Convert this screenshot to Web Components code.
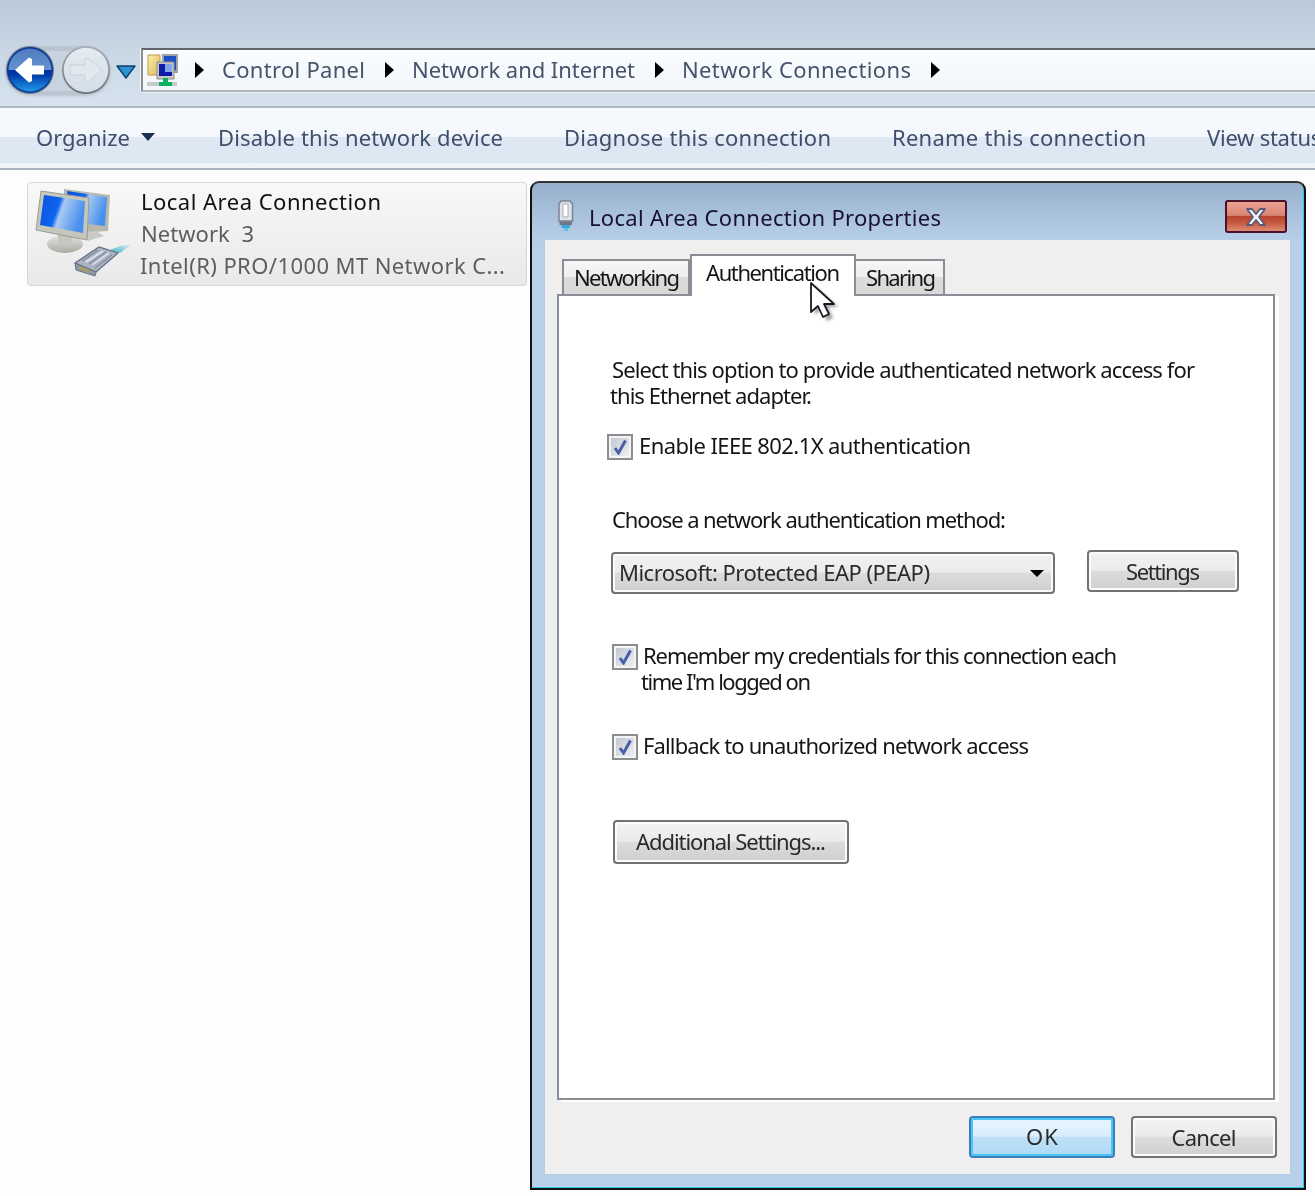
<!DOCTYPE html>
<html lang="en"><head><meta charset="utf-8"><title>Local Area Connection Properties</title>
<style>
html,body{margin:0;padding:0;height:1196px;overflow:hidden;background:#fdfdfd}
body{font:22px/26px "Noto Sans","Open Sans",sans-serif;color:#111}
</style></head><body>
<explorer-window>
  <nav-bar>
    <crumb-item w="143">Control Panel</crumb-item>
    <crumb-item w="223">Network and Internet</crumb-item>
    <crumb-item w="229">Network Connections</crumb-item>
  </nav-bar>
  <command-bar>
    <command-item w="94" menu>Organize</command-item>
    <command-item w="285">Disable this network device</command-item>
    <command-item w="267">Diagnose this connection</command-item>
    <command-item w="254">Rename this connection</command-item>
    <command-item w="300">View status of this connection</command-item>
  </command-bar>
  <connection-list>
    <connection-tile></connection-tile>
  </connection-list>
  <props-dialog></props-dialog>
</explorer-window>
<script>
function def(name, css, html, after){
  customElements.define(name, class extends HTMLElement{
    connectedCallback(){
      if(this.shadowRoot) return;
      const r=this.attachShadow({mode:'open'});
      r.innerHTML='<style>'+css+'</style>'+html(this);
      if(after) after(this,r);
    }
  });
}
def('explorer-window',':host{display:flex;flex-direction:column;position:relative;height:1196px;overflow:hidden}',()=>'<slot></slot>');

def('nav-bar',`
:host{display:flex;align-items:flex-start;height:108px;box-sizing:border-box;padding-top:43px;border-bottom:2px solid #aeb9c6;
 background:linear-gradient(#b9c9d8,#c8d6e4 45%,#d6e3ef);overflow:hidden;flex:none}
svg{display:block;flex:none}
.addr{flex:1;margin:5px 0 0 5px;height:44px;box-sizing:border-box;display:flex;align-items:center;padding-left:4px;
 border:2px solid #8a8d92;border-top-color:#62656a;border-bottom-color:#b4b8bc;border-right:0;
 background:linear-gradient(#fbfdfe,#f1f6fb);box-shadow:0 1px 0 #eaf1f8,-1px 0 0 #eef4fa;font-size:22px;color:#45536b}
`,()=>`
<svg width="136" height="56" viewBox="0 43 136 56" aria-hidden="true">
<defs>
<linearGradient id="bt" x1="0" y1="0" x2="0" y2="1"><stop offset="0" stop-color="#4f7cc0"/><stop offset=".6" stop-color="#6c96d2"/><stop offset="1" stop-color="#3a6cb8"/></linearGradient>
<linearGradient id="bb" x1="0" y1="0" x2="0" y2="1"><stop offset="0" stop-color="#00207e"/><stop offset=".6" stop-color="#0038a8"/><stop offset="1" stop-color="#1f9ae8"/></linearGradient>
<clipPath id="hi"><rect x="0" y="43" width="60" height="27"/></clipPath>
<linearGradient id="fw" x1="0" y1="0" x2="0" y2="1"><stop offset="0" stop-color="#e4ebf1"/><stop offset="1" stop-color="#d3dde6"/></linearGradient>
<linearGradient id="ring" x1="0" y1="0" x2="0" y2="1"><stop offset="0" stop-color="#a6adb6"/><stop offset="1" stop-color="#6c7077"/></linearGradient>
<filter id="s" x="-10%" y="-10%" width="120%" height="120%"><feGaussianBlur stdDeviation=".5"/></filter>
<filter id="h" x="-20%" y="-20%" width="140%" height="140%"><feGaussianBlur stdDeviation="1.1"/></filter>
</defs>
<g filter="url(#h)"><path d="M30 46H86A25 25 0 0 1 86 96H30A25 25 0 0 1 30 46Z" fill="#b9c4cf"/></g>
<path d="M40 51H78V91H40Z" fill="#c7d3df"/>
<g filter="url(#s)">
<circle cx="30" cy="70" r="24" fill="#6f7a8c"/>
<circle cx="30" cy="70" r="23" fill="#0a3a98"/>
<circle cx="30" cy="70" r="21.500" fill="url(#bb)"/>
<circle cx="30" cy="70" r="21.500" fill="url(#bt)" clip-path="url(#hi)"/>
<path d="M15 70 29 57.500 32 59 32 65.500 44 65.500 44 74.500 32 74.500 32 81 29 82.500Z" fill="#fff"/>
<circle cx="86" cy="70" r="24" fill="url(#ring)"/>
<circle cx="86" cy="70" r="22.300" fill="url(#fw)"/>
<path d="M102 70 88 58 85 59 85 65 70 65 70 75 85 75 85 81 88 82Z" fill="#e2e8ee" stroke="#c8d2dc" stroke-width="1"/>
</g>
<path d="M117 66H135L126 78Z" fill="#2d92d0" stroke="#0e3f72" stroke-width="1.400" stroke-linejoin="round" filter="url(#s)"/>
</svg>
<div class="addr"><addr-icon></addr-icon><slot></slot></div>`);

def('addr-icon',':host{display:block;flex:none;width:32px;height:32px}svg{display:block}',()=>`
<svg width="32" height="32" viewBox="147 52 32 32" aria-hidden="true"><defs><filter id="s"><feGaussianBlur stdDeviation=".45"/></filter>
<linearGradient id="f" x1="0" y1="0" x2="1" y2="1"><stop offset="0" stop-color="#fdf0a8"/><stop offset="1" stop-color="#dcb75a"/></linearGradient></defs>
<g filter="url(#s)">
<path d="M148 53H160V73H148Z" fill="url(#f)" stroke="#b99b52"/>
<path d="M162 52H178V71H162Z" fill="#9ea3a8"/><path d="M164 54H176V68H164Z" fill="#1f4fc4"/>
<path d="M157 60H174V77H157Z" fill="#c8c8c2" stroke="#8e8e88"/>
<path d="M159 62H172V74H159Z" fill="#0f1fa8"/><path d="M165 62H172V70H165Z" fill="#7fa6ec"/>
<path d="M147 80H177V84H147Z" fill="#c5ccc8"/>
<path d="M163 76H168V80H172V84H159V80H163Z" fill="#11b060"/>
</g></svg>`);

def('crumb-item',`:host{display:flex;align-items:center;flex:none}
fit-text{margin-top:-2px}
i{display:block;width:0;height:0;border-left:9px solid #000;border-top:8px solid transparent;border-bottom:8px solid transparent}
.a{margin:0 18px 0 20px}
.z{margin-left:20px}
`,t=>`<i class="a" style="${t.previousElementSibling?'':'margin-left:16px'}"></i><fit-text w="${t.getAttribute('w')}"><slot></slot></fit-text>${t.nextElementSibling?'':'<i class="z"></i>'}`);

def('command-bar',`:host{display:flex;align-items:center;height:62px;box-sizing:border-box;padding:0 0 2px 36px;gap:61px;flex:none;overflow:hidden;white-space:nowrap;
 border-bottom:2px solid #a9b3c4;
 background:linear-gradient(#f7fafd 0,#f4f8fc 48%,#dfe8f3 49%,#dde7f2 91%,#eff4f9 92%,#f2f6fa 100%);color:#3e4f6b}`,()=>'<slot></slot>');
def('command-item',`:host{display:flex;align-items:center;flex:none}
b{display:block;width:0;height:0;margin:0 2px 0 11px;border-top:8px solid #1d2f55;border-left:7px solid transparent;border-right:7px solid transparent}`,
t=>`<fit-text w="${t.getAttribute('w')}"><slot></slot></fit-text>${t.hasAttribute('menu')?'<b></b>':''}`);

def('connection-list',':host{display:block;flex:1;padding:12px 0 0 27px;background:#fdfdfd}',()=>'<slot></slot>');
def('connection-tile',`:host{display:flex;width:500px;height:104px;box-sizing:border-box;border:1px solid #d6d6d6;border-radius:4px;padding:2px 0 0 7px;
 background:linear-gradient(#f8f8f8,#e9e9e9);line-height:32px}
svg{flex:none;display:block;margin-top:1px}
.t{margin-left:6px;display:flex;flex-direction:column;align-items:flex-start;color:#5e5e5e}
.n{color:#111}.l{margin-left:-1px}`,()=>`
<svg width="100" height="96" viewBox="35 186 100 96" aria-hidden="true"><defs>
<filter id="s" x="-5%" y="-5%" width="110%" height="110%"><feGaussianBlur stdDeviation=".55"/></filter>
<linearGradient id="sc" x1="0" y1="0" x2="1" y2=".3"><stop offset="0" stop-color="#0a50e0"/><stop offset=".45" stop-color="#0f66ee"/><stop offset=".55" stop-color="#a8caf2"/><stop offset="1" stop-color="#4a90ee"/></linearGradient>
<linearGradient id="bs" x1="0" y1="0" x2="0" y2="1"><stop stop-color="#e4e6e0"/><stop offset="1" stop-color="#a8aaa4"/></linearGradient>
<linearGradient id="ca" x1="0" y1="1" x2="1" y2="0"><stop stop-color="#3fb0c4"/><stop offset="1" stop-color="#e4f4f6"/></linearGradient>
</defs><g filter="url(#s)">
<path d="M64 189 110 195 108 231 92 232 64 230Z" fill="#b7b9ae"/><path d="M67 191 107 197 105 226 70 222Z" fill="url(#sc)"/>
<path d="M96 231 104 236 88 241 82 233Z" fill="#c9cbc4"/>
<ellipse cx="65" cy="244" rx="18" ry="9" fill="url(#bs)"/><path d="M58 232H72V243H58Z" fill="#c4c6bf"/>
<path d="M41 191 89 198 87 240 36 230Z" fill="#c5c7bb" stroke="#9a9c92"/><path d="M44 195 85 201 83 233 40 225Z" fill="url(#sc)"/>
<path d="M110 250 120 246 132 244 120 253Z" fill="url(#ca)"/>
<path d="M75 263 99 247 118 253 96 272Z" fill="#aab3c2" stroke="#687184" stroke-width="1.300"/>
<path d="M75 263 96 272 95 276 76 270Z" fill="#8f97a6" stroke="#687184"/>
<path d="M79 266 89 270 89 273 79 269Z" fill="#a89f62"/>
<path d="M86 262 103 251M92 265 109 253" stroke="#e4e9f0" stroke-width="1.500" fill="none"/>
<path d="M82 261 98 250M89 264 106 252M95 268 112 255" stroke="#757e90" stroke-width="1" fill="none"/>
</g></svg>
<div class="t"><fit-text class="n" w="240">Local Area Connection</fit-text><fit-text w="113" style="white-space:pre">Network  3</fit-text><fit-text class="l" w="365">Intel(R) PRO/1000 MT Network C...</fit-text></div>`);

def('win-tab',`:host{display:block;box-sizing:border-box;height:35px;border:2px solid #8a8f96;border-bottom:0;margin:0 0 2px -2px;padding:0 7px 0 10px;line-height:33px;
 background:linear-gradient(#f6f6f6,#efefef 48%,#dcdcdc 50%,#d8d8d8);flex:none;color:#151515}
:host(:first-child){margin-left:0;padding-right:8px}
:host([active]){height:42px;background:#fff;position:relative;z-index:2;line-height:33px;padding:0 14px;margin:0}`,
t=>`<fit-text w="${t.getAttribute('w')}"><slot></slot></fit-text>`);

def('win-check',`:host{display:flex;align-items:flex-start;color:#151515}
svg{display:block;flex:none}.l{display:flex;flex-direction:column;align-items:flex-start;margin-top:-2px}`,t=>`
<svg width="26" height="26" viewBox="0 0 26 26" aria-hidden="true"><defs><linearGradient id="g" x1="0" y1="0" x2="1" y2="1"><stop stop-color="#c4c8d2"/><stop offset="1" stop-color="#eceff0"/></linearGradient>
<filter id="s"><feGaussianBlur stdDeviation=".35"/></filter></defs>
<rect x="1" y="1" width="24" height="24" fill="#f4f4f4" stroke="#8b8d8f" stroke-width="2"/><rect x="4" y="4" width="18" height="18" fill="url(#g)"/>
<path d="M8 14 11.500 19 18.500 6.500" fill="none" stroke="#4a5ea8" stroke-width="3" filter="url(#s)"/></svg>
<div class="l" style="margin-left:${t.getAttribute('gap')||5}px"><slot></slot></div>`);

const glossy='background:linear-gradient(#f2f2f2,#ebebeb 48%,#dcdcdc 50%,#cfcfcf);border:2px solid #737373;border-radius:4px;box-shadow:inset 0 0 0 2px #fbfbfb;box-sizing:border-box;';
def('win-button',`:host{display:flex;align-items:center;justify-content:center;flex:none;${glossy}color:#2a2a2a}
:host([default]){background:linear-gradient(#eaf6fe,#d8ecfc 48%,#bfdff7 50%,#b0daf7);border-color:#3a7fb8;box-shadow:inset 0 0 0 2px #49c6f6,inset 0 3px 0 #dff2fe}`,
t=>`<fit-text w="${t.getAttribute('w')}"><slot></slot></fit-text>`);
def('win-combo',`:host{display:flex;align-items:center;justify-content:space-between;box-sizing:border-box;height:42px;width:444px;padding:0 9px 0 6px;${glossy}color:#2a2a2a}
fit-text{margin-top:-2px}
b{display:block;width:0;height:0;border-top:7px solid #000;border-left:7px solid transparent;border-right:7px solid transparent}`,
t=>`<fit-text w="${t.getAttribute('w')}"><slot></slot></fit-text><b></b>`);

def('props-dialog',`
:host{position:absolute;left:530px;top:181px;width:776px;height:1009px;box-sizing:border-box;display:flex;flex-direction:column;
 border:2px solid #111;border-top-color:#333;border-radius:9px 9px 0 0;
 background:linear-gradient(#96b1cd,#b8cfe9 58px);box-shadow:inset -1px -1px 0 #2cc8e8;padding:0 14px 14px 13px;z-index:5;color:#151515}
.title{height:57px;box-sizing:border-box;padding:10px 0 0 44px;flex:none;display:flex;align-items:center;position:relative;color:#1a1030}
.title>svg{position:absolute;left:13px;top:17px}
.x{position:absolute;right:3px;top:17px;width:62px;height:33px;box-sizing:border-box;border:2px solid #4b1228;border-radius:3px;
 background:linear-gradient(#eba391,#d98674 46%,#b9442c 50%,#c5563e 70%,#e08a76);display:flex;align-items:center;justify-content:center}
.x svg{display:block}
.client{flex:1;background:#efefef;display:flex;flex-direction:column;position:relative;min-height:0}
.tabs{display:flex;align-items:flex-end;height:56px;box-sizing:border-box;padding:14px 0 0 17px;flex:none;position:relative;z-index:1;margin-bottom:-2px}
.panel{flex:1;margin-left:12px;width:718px;box-sizing:border-box;border:2px solid #8a8f96;background:#fff;box-shadow:4px 2px 0 #fff;padding:60px 0 0 0;min-height:0;display:flex;flex-direction:column;align-items:flex-start}
.p{margin-left:51px;display:flex;flex-direction:column;align-items:flex-start}
.i{margin-left:2px}
.foot{flex:none;height:74px;box-sizing:border-box;padding:16px 13px 0 0;display:flex;justify-content:flex-end;gap:16px}
.foot win-button{width:146px;height:42px}
.row{display:flex;align-items:flex-start;margin:18px 0 0 52px}
.cursor{position:absolute;left:264px;top:41px;z-index:9}
`,()=>`
<div class="title"><svg width="16" height="32" viewBox="0 0 16 32" aria-hidden="true"><defs><filter id="s"><feGaussianBlur stdDeviation=".4"/></filter></defs><g filter="url(#s)">
<path d="M3 1H12L14.500 4V21H1V4Z" fill="#dfe2e8" stroke="#7d8290" stroke-width="1.500"/><path d="M5 4H10V17H5Z" fill="#fff" stroke="#a8acb8"/>
<path d="M1.500 21.500H14V25H1.500Z" fill="#71768a"/><path d="M3.500 25H12V28H3.500Z" fill="#3aa7d9"/><path d="M6 28H10V31H6Z" fill="#5ac6ea"/></g></svg>
<fit-text w="352">Local Area Connection Properties</fit-text>
<div class="x"><svg width="26" height="20" viewBox="0 0 26 20" aria-hidden="true"><path d="M4 2H9L13 7 17 2H22L16 10 22 18H17L13 13 9 18H4L10 10Z" fill="#f2f2f2" stroke="#5a5a78" stroke-width="1.800" stroke-linejoin="round"/></svg></div></div>
<div class="client">
<div class="tabs"><win-tab w="106">Networking</win-tab><win-tab w="134" active>Authentication</win-tab><win-tab w="70">Sharing</win-tab></div>
<div class="panel">
<div class="p"><fit-text class="i" w="583">Select this option to provide authenticated network access for</fit-text><fit-text w="202">this Ethernet adapter.</fit-text></div>
<win-check gap="6" style="margin:26px 0 0 48px"><fit-text w="332">Enable IEEE 802.1X authentication</fit-text></win-check>
<fit-text w="394" style="margin:46px 0 0 53px">Choose a network authentication method:</fit-text>
<div class="row"><win-combo w="311" style="margin-top:2px">Microsoft: Protected EAP (PEAP)</win-combo><win-button w="74" style="width:152px;height:42px;margin-left:32px">Settings</win-button></div>
<win-check gap="3" style="margin:50px 0 0 53px"><fit-text class="i" w="474">Remember my credentials for this connection each</fit-text><fit-text w="170">time I'm logged on</fit-text></win-check>
<win-check gap="5" style="margin:40px 0 0 53px"><fit-text w="386">Fallback to unauthorized network access</fit-text></win-check>
<win-button w="190" style="width:236px;height:44px;margin:60px 0 0 54px;padding-bottom:2px">Additional Settings...</win-button>
</div>
<div class="foot"><win-button default w="32" style="padding-bottom:2px">OK</win-button><win-button w="65">Cancel</win-button></div>
<svg class="cursor" width="30" height="42" viewBox="0 0 30 42" aria-hidden="true"><defs><filter id="d" x="-30%" y="-30%" width="160%" height="160%"><feGaussianBlur stdDeviation="1.600"/></filter></defs>
<path d="M4 3V32L11 26 16 38 22 35 17 24H27Z" fill="#555" opacity=".55" transform="translate(2 2)" filter="url(#d)"/>
<path d="M2 2V31L9 25 14 36 20 33 15 23H25Z" fill="#fff" stroke="#1a1a22" stroke-width="1.800" stroke-linejoin="round"/></svg>
</div>`);

customElements.define('fit-text',class extends HTMLElement{
  connectedCallback(){
    if(!this.shadowRoot){
      this.attachShadow({mode:'open'}).innerHTML='<style>:host{display:block;white-space:nowrap;flex:none;filter:blur(.3px)}</style><span id="m"><slot></slot></span>';
    }
    const w=+this.getAttribute('w'), s=this.shadowRoot.getElementById('m');
    s.style.letterSpacing='0';
    const txt=(this.textContent||'').trim();
    let len=txt.length;
    const slot=s.querySelector('slot');
    if(!len){ len=slot.assignedNodes({flatten:true}).map(n=>n.textContent).join('').trim().length; }
    const nat=s.getBoundingClientRect().width;
    if(w&&len>1){
      s.style.letterSpacing=((w-nat)/(len-1)).toFixed(3)+'px';
      this.style.width=w+'px';
    }
  }
});
</script>
</body></html>
